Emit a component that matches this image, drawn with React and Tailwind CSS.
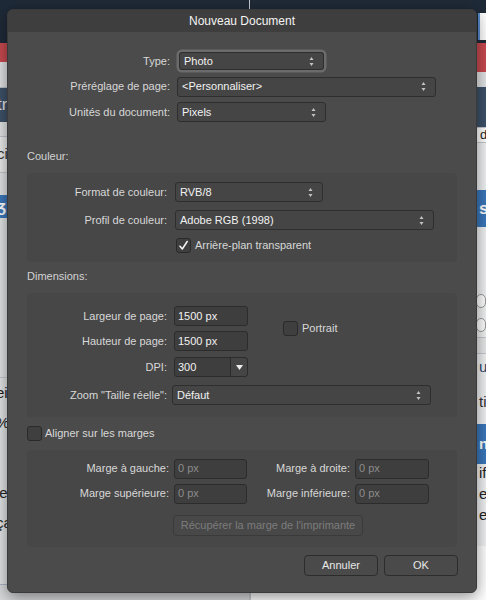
import React from 'react';

const Arrows = () => (
  <svg width="5" height="11" viewBox="0 0 5 11" className="shrink-0">
    <path d="M0.5 4 L2.5 1 L4.5 4 Z M0.5 7 L2.5 10 L4.5 7 Z" fill="#c2c2c2" />
  </svg>
);

function Select({ value, className = '' }) {
  return (
    <div className={`flex items-center justify-between h-[20px] pl-[4px] pr-[9px] bg-[#454545] border border-[#2e2e2e] rounded-[3px] text-[11px] text-[#f2f2f2] ${className}`}>
      <span>{value}</span>
      <Arrows />
    </div>
  );
}

function Field({ value, dim, className = '' }) {
  return (
    <div className={`flex items-center h-[20px] pl-[3px] bg-[#3e3e3e] border border-[#2c2c2c] rounded-[3px] text-[11px] ${dim ? 'text-[#8c8c8c]' : 'text-[#f2f2f2]'} ${className}`}>
      {value}
    </div>
  );
}

function Check({ checked }) {
  return (
    <div className="w-[15px] h-[15px] shrink-0 rounded-[3px] bg-[#3f3f3f] border border-[#2a2a2a] flex items-center justify-center">
      {checked && (
        <svg width="11" height="11" viewBox="0 0 11 11">
          <path d="M2 6.2 L4.3 9 L9.2 1.5" fill="none" stroke="#f5f5f5" strokeWidth="1.5" strokeLinecap="round" strokeLinejoin="round" />
        </svg>
      )}
    </div>
  );
}

function Label({ children, className = '' }) {
  return <div className={`shrink-0 text-right text-[11px] text-[#d8d8d8] ${className}`}>{children}</div>;
}

function Button({ children, disabled, className = '' }) {
  return (
    <div className={`flex items-center justify-center h-[21px] rounded-[4px] border text-[11px] ${disabled ? 'bg-[#484848] border-[#3a3a3a] text-[#7c7c7c]' : 'bg-[#4a4a4a] border-[#2c2c2c] text-[#e8e8e8]'} ${className}`}>
      {children}
    </div>
  );
}

function Background() {
  return (
    <div className="flex h-full text-[15px]">
      {/* left side of the page behind the dialog */}
      <div className="w-[250px] flex flex-col bg-[#e4e5e6] border-r border-[#c8ccd0]">
        <div className="h-[43px] bg-[#1f2a38]" />
        <div className="h-[19px] bg-[#c84a50]" />
        <div className="h-[26px] bg-[#e2e3e4] border-b border-[#b9c1ca]" />
        <div className="h-[34px] bg-[#3e5269] text-[#e6e6e6] flex items-center -ml-[3px] text-[17px]">tr</div>
        <div className="h-[15px] border-b border-[#bfc5cb]" />
        <div className="h-[35px] bg-[#ececec] flex items-center -ml-[3px] text-[#333]">ci</div>
        <div className="h-[23px] border-t border-[#c5cad0]" />
        <div className="h-[23px] bg-[#3b77bb] text-white flex items-center -ml-[3px] font-bold text-[17px]">ʒ</div>
        <div className="h-[160px] border-b border-[#c5cad0]" />
        <div className="h-[30px] flex items-center -ml-[4px] text-[#222]">ei</div>
        <div className="h-[30px] flex items-center -ml-[4px] text-[#222]">%</div>
        <div className="h-[40px]" />
        <div className="h-[30px] flex items-center -ml-[4px] text-[#222]">le</div>
        <div className="h-[30px] flex items-center -ml-[4px] text-[#222]">ça</div>
        <div className="flex-1 border-t border-[#aab7c6] mt-[46px] bg-[#d8d9db]" />
      </div>
      {/* right side of the page behind the dialog */}
      <div className="flex-1 flex flex-col bg-[#f1f2f3] overflow-hidden">
        <div className="h-[13px] bg-[#1f2a38]" />
        <div className="h-[27px] bg-[#1f2a38] flex">
          <div className="ml-[228px] flex-1 bg-white border-l-2 border-[#5b8fd0]" />
        </div>
        <div className="h-[3px] bg-[#1f2a38]" />
        <div className="h-[29px] bg-[#c84a50]" />
        <div className="h-[15px] bg-[#e2e3e4]" />
        <div className="h-[40px] bg-[#3e5269]" />
        <div className="h-[16px] bg-white border-y border-[#c5cad0] pl-[230px] flex items-center text-[#222] text-[13px]">d</div>
        <div className="h-[47px]" />
        <div className="h-[37px] bg-[#3b77bb] text-white font-bold text-[17px] pl-[229px] flex items-center">s</div>
        <div className="h-[62px]" />
        <div className="h-[24px] pl-[226px] flex items-center">
          <div className="w-[14px] h-[14px] rounded-full border border-[#999] bg-white" />
        </div>
        <div className="h-[24px] pl-[226px] flex items-center">
          <div className="w-[14px] h-[14px] rounded-full border border-[#999] bg-white" />
        </div>
        <div className="h-[17px] border-y border-[#c5cad0] bg-[#e8e9ea]" />
        <div className="h-[26px] pl-[229px] flex items-center text-[#2d4a6e]">ur</div>
        <div className="h-[44px] pl-[229px] flex items-center text-[#333]">tiv</div>
        <div className="h-[40px] bg-[#3b77bb] text-white font-bold pl-[229px] flex items-center">n</div>
        <div className="h-[20px] pl-[229px] flex items-end text-[#222]">ifi</div>
        <div className="h-[21px] pl-[229px] flex items-end text-[#222]">e:</div>
        <div className="h-[21px] pl-[229px] flex items-end text-[#222]">er</div>
        <div className="h-[20px]" />
        <div className="flex items-center gap-[4px] pl-[5px] bg-white border-l border-[#c5cad0] text-[#222] text-[16px] leading-none pt-[4px]">
          <div className="w-[12px] h-[12px] rounded-full border border-[#999]" />
          <span>Ne pas s'abonner à ce sujet</span>
        </div>
        <div className="flex-1 bg-white border-l border-[#c5cad0]" />
      </div>
    </div>
  );
}

export default function App() {
  return (
    <div className="relative w-[486px] h-[600px] overflow-hidden font-['Liberation_Sans',Arial,sans-serif]">
      <Background />

      <div className="absolute left-[7px] top-[9px] w-[470px] h-[584px] flex flex-col bg-[#4b4b4b] rounded-[6px] overflow-hidden shadow-[0_4px_16px_rgba(0,0,0,0.45)] border border-[#3a3a3a]">
        <div className="h-[22px] shrink-0 flex items-center justify-center bg-[#3e3e3e] text-[12px] text-[#f4f4f4]">
          Nouveau Document
        </div>

        {/* document settings */}
        <div className="flex flex-col gap-[5.5px] pt-[19px]">
          <div className="flex items-center h-[20px]">
            <Label className="w-[162px]">Type:</Label>
            <div className="ml-[9px] ring-[2.5px] ring-[#6b6b6b] rounded-[3px]">
              <Select value="Photo" className="w-[145px] !h-[18px]" />
            </div>
          </div>
          <div className="flex items-center h-[20px]">
            <Label className="w-[162px]">Préréglage de page:</Label>
            <Select value="<Personnaliser>" className="ml-[7px] w-[259px]" />
          </div>
          <div className="flex items-center h-[20px]">
            <Label className="w-[162px]">Unités du document:</Label>
            <Select value="Pixels" className="ml-[7px] w-[149px]" />
          </div>
        </div>

        {/* colour */}
        <div className="mt-[27px] h-[14px] pl-[19px] text-[11px] text-[#d2d2d2] flex items-center">Couleur:</div>
        <div className="mt-[10px] mx-[19px] h-[89px] bg-[#474747] rounded-[4px] flex flex-col pt-[9px]">
          <div className="flex items-center h-[20px]">
            <Label className="w-[140px]">Format de couleur:</Label>
            <Select value="RVB/8" className="ml-[8px] w-[148px]" />
          </div>
          <div className="flex items-center h-[20px] mt-[8px]">
            <Label className="w-[140px]">Profil de couleur:</Label>
            <Select value="Adobe RGB (1998)" className="ml-[8px] w-[259px]" />
          </div>
          <div className="flex items-center gap-[4px] mt-[7px] ml-[149px] text-[11px] text-[#d8d8d8]">
            <Check checked />
            <span>Arrière-plan transparent</span>
          </div>
        </div>

        {/* dimensions */}
        <div className="mt-[7px] h-[14px] pl-[19px] text-[11px] text-[#d2d2d2] flex items-center">Dimensions:</div>
        <div className="mt-[10px] mx-[19px] h-[124px] bg-[#474747] rounded-[4px] flex flex-col pt-[13px]">
          <div className="flex items-center">
            <div className="flex flex-col gap-[5px]">
              <div className="flex items-center h-[20px]">
                <Label className="w-[140px]">Largeur de page:</Label>
                <Field value="1500 px" className="ml-[7px] w-[74px]" />
              </div>
              <div className="flex items-center h-[20px]">
                <Label className="w-[140px]">Hauteur de page:</Label>
                <Field value="1500 px" className="ml-[7px] w-[74px]" />
              </div>
            </div>
            <div className="ml-[35px] flex items-center gap-[4px] text-[11px] text-[#d8d8d8]">
              <Check />
              <span>Portrait</span>
            </div>
          </div>
          <div className="flex items-center h-[20px] mt-[6px]">
            <Label className="w-[140px]">DPI:</Label>
            <div className="ml-[7px] w-[74px] h-[20px] flex bg-[#3e3e3e] border border-[#2c2c2c] rounded-[3px] text-[11px] text-[#f2f2f2]">
              <div className="flex-1 flex items-center pl-[3px] border-r border-[#2c2c2c]">300</div>
              <div className="w-[16px] flex items-center justify-center bg-[#454545] rounded-r-[3px]">
                <svg width="7" height="5" viewBox="0 0 7 5">
                  <path d="M0 0 L7 0 L3.5 5 Z" fill="#eeeeee" />
                </svg>
              </div>
            </div>
          </div>
          <div className="flex items-center h-[20px] mt-[8px]">
            <Label className="w-[140px]">Zoom "Taille réelle":</Label>
            <Select value="Défaut" className="ml-[5px] w-[259px]" />
          </div>
        </div>

        <div className="mt-[8px] ml-[19px] flex items-center gap-[3px] text-[11px] text-[#d8d8d8]">
          <Check />
          <span>Aligner sur les marges</span>
        </div>

        {/* margins */}
        <div className="mt-[8px] mx-[19px] h-[97px] bg-[#474747] rounded-[4px] flex flex-col pt-[9px]">
          <div className="flex items-center h-[20px]">
            <Label className="w-[142px]">Marge à gauche:</Label>
            <Field value="0 px" dim className="ml-[5px] w-[73px]" />
            <Label className="w-[103px]">Marge à droite:</Label>
            <Field value="0 px" dim className="ml-[5px] w-[74px]" />
          </div>
          <div className="flex items-center h-[20px] mt-[5px]">
            <Label className="w-[142px]">Marge supérieure:</Label>
            <Field value="0 px" dim className="ml-[5px] w-[73px]" />
            <Label className="w-[103px]">Marge inférieure:</Label>
            <Field value="0 px" dim className="ml-[5px] w-[74px]" />
          </div>
          <Button disabled className="mt-[11px] ml-[146px] w-[190px]">Récupérer la marge de l'imprimante</Button>
        </div>

        <div className="mt-[8px] flex justify-end gap-[6px] pr-[18px]">
          <Button className="w-[74px]">Annuler</Button>
          <Button className="w-[74px]">OK</Button>
        </div>
      </div>
    </div>
  );
}
